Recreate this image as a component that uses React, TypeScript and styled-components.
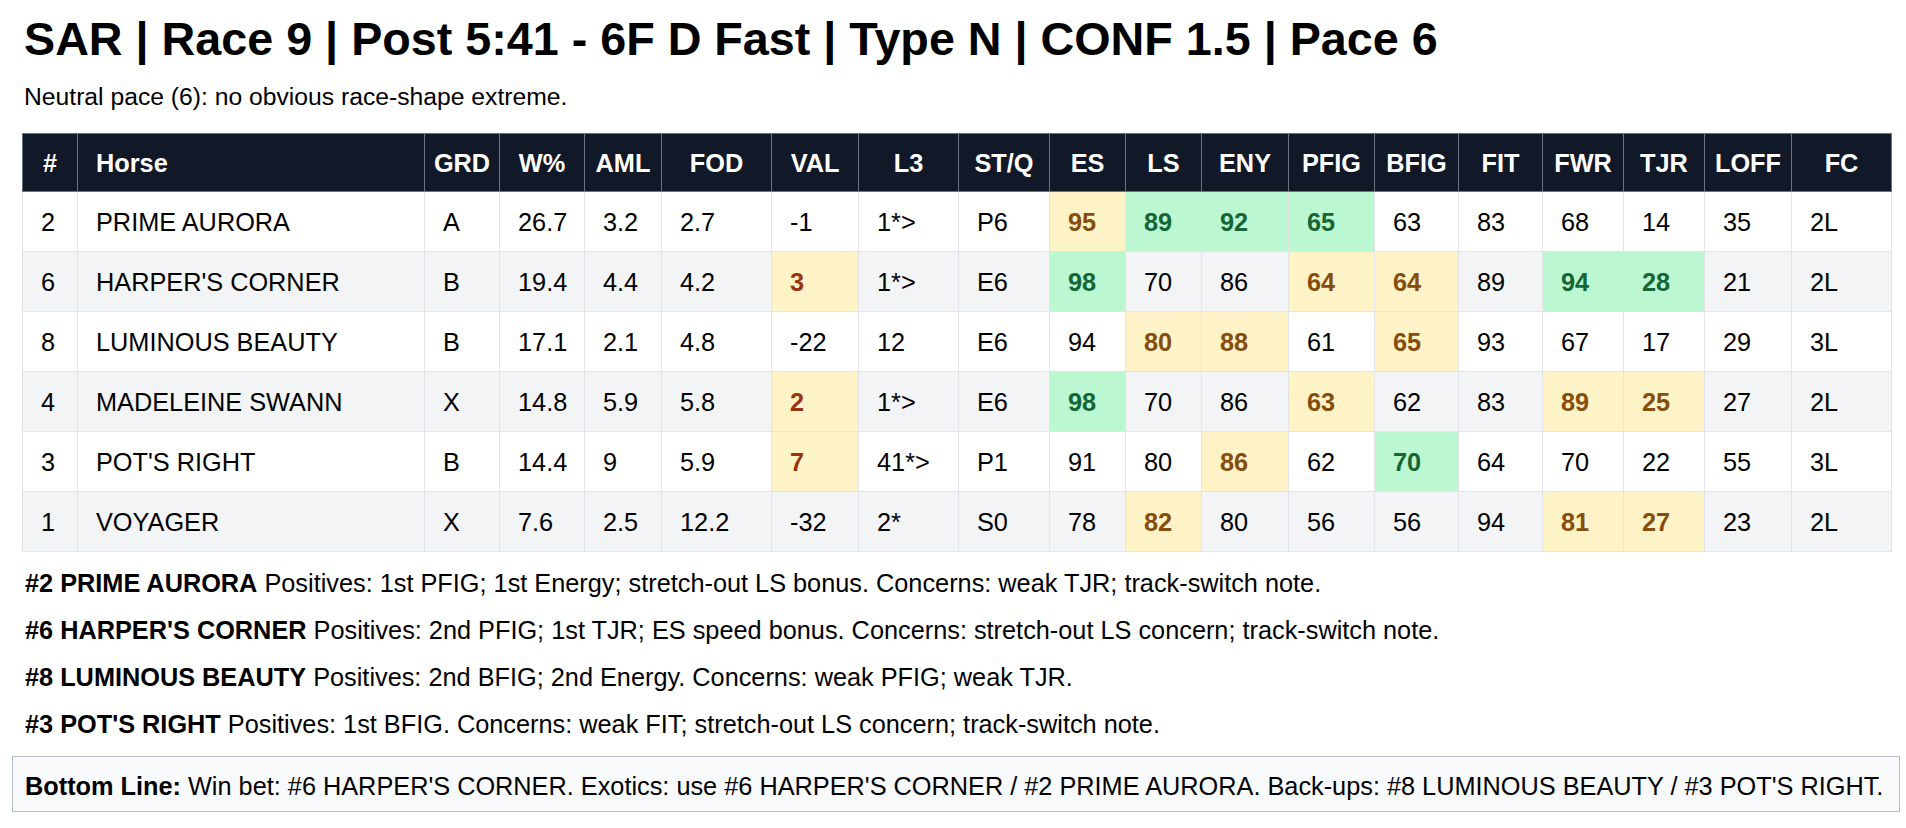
import React from "react";
import styled, { createGlobalStyle } from "styled-components";

type Tone = "good" | "warn" | "value" | undefined;

interface Cell {
    v: string;
    t?: Tone;
}

interface Runner {
    num: string;
    name: string;
    cells: Cell[];
}

const COLUMNS = [
    { label: "#", width: 55 },
    { label: "Horse", width: 347, left: true },
    { label: "GRD", width: 75 },
    { label: "W%", width: 85 },
    { label: "AML", width: 77 },
    { label: "FOD", width: 110 },
    { label: "VAL", width: 87 },
    { label: "L3", width: 100 },
    { label: "ST/Q", width: 91 },
    { label: "ES", width: 76 },
    { label: "LS", width: 76 },
    { label: "ENY", width: 87 },
    { label: "PFIG", width: 86 },
    { label: "BFIG", width: 84 },
    { label: "FIT", width: 84 },
    { label: "FWR", width: 81 },
    { label: "TJR", width: 81 },
    { label: "LOFF", width: 87 },
    { label: "FC", width: 100 },
];

const c = (v: string, t?: Tone): Cell => ({ v, t });

const RUNNERS: Runner[] = [
    {
        num: "2",
        name: "PRIME AURORA",
        cells: [c("A"), c("26.7"), c("3.2"), c("2.7"), c("-1"), c("1*>"), c("P6"), c("95", "warn"), c("89", "good"), c("92", "good"), c("65", "good"), c("63"), c("83"), c("68"), c("14"), c("35"), c("2L")],
    },
    {
        num: "6",
        name: "HARPER'S CORNER",
        cells: [c("B"), c("19.4"), c("4.4"), c("4.2"), c("3", "value"), c("1*>"), c("E6"), c("98", "good"), c("70"), c("86"), c("64", "warn"), c("64", "warn"), c("89"), c("94", "good"), c("28", "good"), c("21"), c("2L")],
    },
    {
        num: "8",
        name: "LUMINOUS BEAUTY",
        cells: [c("B"), c("17.1"), c("2.1"), c("4.8"), c("-22"), c("12"), c("E6"), c("94"), c("80", "warn"), c("88", "warn"), c("61"), c("65", "warn"), c("93"), c("67"), c("17"), c("29"), c("3L")],
    },
    {
        num: "4",
        name: "MADELEINE SWANN",
        cells: [c("X"), c("14.8"), c("5.9"), c("5.8"), c("2", "value"), c("1*>"), c("E6"), c("98", "good"), c("70"), c("86"), c("63", "warn"), c("62"), c("83"), c("89", "warn"), c("25", "warn"), c("27"), c("2L")],
    },
    {
        num: "3",
        name: "POT'S RIGHT",
        cells: [c("B"), c("14.4"), c("9"), c("5.9"), c("7", "value"), c("41*>"), c("P1"), c("91"), c("80"), c("86", "warn"), c("62"), c("70", "good"), c("64"), c("70"), c("22"), c("55"), c("3L")],
    },
    {
        num: "1",
        name: "VOYAGER",
        cells: [c("X"), c("7.6"), c("2.5"), c("12.2"), c("-32"), c("2*"), c("S0"), c("78"), c("82", "warn"), c("80"), c("56"), c("56"), c("94"), c("81", "warn"), c("27", "warn"), c("23"), c("2L")],
    },
];

const NOTES = [
    { head: "#2 PRIME AURORA", text: "Positives: 1st PFIG; 1st Energy; stretch-out LS bonus. Concerns: weak TJR; track-switch note." },
    { head: "#6 HARPER'S CORNER", text: "Positives: 2nd PFIG; 1st TJR; ES speed bonus. Concerns: stretch-out LS concern; track-switch note." },
    { head: "#8 LUMINOUS BEAUTY", text: "Positives: 2nd BFIG; 2nd Energy. Concerns: weak PFIG; weak TJR." },
    { head: "#3 POT'S RIGHT", text: "Positives: 1st BFIG. Concerns: weak FIT; stretch-out LS concern; track-switch note." },
];

export default function App() {
    return (
        <>
            <GlobalStyle />
            <Page>
                <Title>SAR | Race 9 | Post 5:41 - 6F D Fast | Type N | CONF 1.5 | Pace 6</Title>
                <Summary>Neutral pace (6): no obvious race-shape extreme.</Summary>
                <Table>
                    <colgroup>
                        {COLUMNS.map((col) => (
                            <col key={col.label} style={{ width: col.width }} />
                        ))}
                    </colgroup>
                    <thead>
                        <tr>
                            {COLUMNS.map((col) => (
                                <HeadCell key={col.label} $left={col.left}>
                                    {col.label}
                                </HeadCell>
                            ))}
                        </tr>
                    </thead>
                    <tbody>
                        {RUNNERS.map((r) => (
                            <Row key={r.num}>
                                <DataCell>{r.num}</DataCell>
                                <DataCell>{r.name}</DataCell>
                                {r.cells.map((cell, i) => (
                                    <DataCell key={i} $tone={cell.t}>
                                        {cell.v}
                                    </DataCell>
                                ))}
                            </Row>
                        ))}
                    </tbody>
                </Table>
                <Notes>
                    {NOTES.map((n) => (
                        <Note key={n.head}>
                            <strong>{n.head}</strong> {n.text}
                        </Note>
                    ))}
                </Notes>
                <BottomLine>
                    <strong>Bottom Line:</strong> Win bet: #6 HARPER'S CORNER. Exotics: use #6 HARPER'S CORNER / #2 PRIME AURORA. Back-ups: #8 LUMINOUS BEAUTY / #3 POT'S RIGHT.
                </BottomLine>
            </Page>
        </>
    );
}

const GlobalStyle = createGlobalStyle`
    html, body {
        margin: 0;
        padding: 0;
        background: #ffffff;
    }
    body {
        font-family: "Liberation Sans", Arial, Helvetica, sans-serif;
        color: #000000;
    }
`;

const Page = styled.div`
    display: flex;
    flex-direction: column;
    align-items: flex-start;
    padding: 13px 6px 0 12px;
`;

const Title = styled.h1`
    margin: 0;
    padding-left: 12px;
    font-size: 46.7px;
    line-height: 53px;
    font-weight: 700;
`;

const Summary = styled.p`
    margin: 17px 0 0;
    padding-left: 12px;
    font-size: 24.7px;
    line-height: 28px;
`;

const Table = styled.table`
    margin: 22px 0 0 10px;
    width: 1869px;
    table-layout: fixed;
    border-collapse: collapse;
    font-size: 25.3px;
    line-height: 28px;
`;

const HeadCell = styled.th<{ $left?: boolean }>`
    height: 57px;
    padding: 0 8px;
    background: #111827;
    color: #ffffff;
    font-weight: 700;
    text-align: ${(p) => (p.$left ? "left" : "center")};
    padding-left: ${(p) => (p.$left ? "18px" : "8px")};
    border: 1px solid #6b7280;
    white-space: nowrap;
`;

const Row = styled.tr`
    height: 60px;
    background: #ffffff;

    &:nth-child(even) {
        background: #f3f4f6;
    }
`;

const toneBg = (t: Tone) => (t === "good" ? "#bbf7d0" : t ? "#fef3c7" : "transparent");
const toneFg = (t: Tone) => (t === "good" ? "#166534" : t === "value" ? "#9a3412" : t ? "#854d0e" : "#000000");

const DataCell = styled.td<{ $tone?: Tone }>`
    padding: 0 18px;
    text-align: left;
    white-space: nowrap;
    border: 1px solid #e2e4e9;
    background: ${(p) => toneBg(p.$tone)};
    color: ${(p) => toneFg(p.$tone)};
    font-weight: ${(p) => (p.$tone ? 700 : 400)};
`;

const Notes = styled.div`
    display: flex;
    flex-direction: column;
    gap: 19px;
    margin-top: 17px;
    padding-left: 13px;
`;

const Note = styled.p`
    margin: 0;
    font-size: 25.3px;
    line-height: 28px;
`;

const BottomLine = styled.div`
    margin-top: 18px;
    width: 1888px;
    box-sizing: border-box;
    padding: 15px 12px 11px;
    background: #f8f9fb;
    border: 1px solid #b9bfca;
    font-size: 25.3px;
    line-height: 28px;
    white-space: nowrap;
`;
